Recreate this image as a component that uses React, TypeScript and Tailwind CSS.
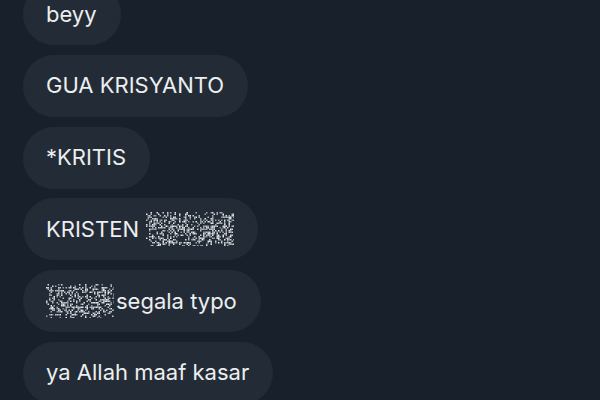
const FONT = { fontFamily: "Inter, 'Liberation Sans', sans-serif" };

function rng(seed: number) {
  let s = seed;
  return () => {
    s = (s * 1103515245 + 12345) & 0x7fffffff;
    return s / 0x7fffffff;
  };
}

function Redacted({ width, height, seed }: { width: number; height: number; seed: number }) {
  const rand = rng(seed);
  const dots: { x: number; y: number; o: number }[] = [];
  for (let y = 0; y < height; y += 1.5) {
    for (let x = 0; x < width; x += 1.5) {
      const edge = Math.min(x, width - x, y, height - y);
      const p = edge < 3 ? 0.2 : 0.42;
      if (rand() < p) dots.push({ x, y, o: 0.5 + rand() * 0.5 });
    }
  }
  return (
    <svg width={width} height={height} className="shrink-0">
      {dots.map((d, i) => (
        <rect key={i} x={d.x} y={d.y} width={1.5} height={1.5} fill="#eceef0" opacity={d.o} />
      ))}
    </svg>
  );
}

function Bubble({ children }: { children: React.ReactNode }) {
  return (
    <div className="flex h-[62px] w-fit items-center rounded-full bg-[#232c36] pl-[23px] pr-[24px] text-[22px] text-[#eceef0]">
      {children}
    </div>
  );
}

export default function App() {
  return (
    <div className="h-[400px] w-[600px] overflow-hidden bg-[#18212b]" style={FONT}>
      <div className="mt-[-17px] flex flex-col gap-[9.75px] pl-[23px]">
        <Bubble>beyy</Bubble>
        <Bubble>GUA KRISYANTO</Bubble>
        <Bubble>*KRITIS</Bubble>
        <Bubble>
          <span>KRISTEN</span>
          <span className="ml-[7px]">
            <Redacted width={88} height={34} seed={17} />
          </span>
        </Bubble>
        <Bubble>
          <Redacted width={68} height={34} seed={91} />
          <span className="ml-[2px]">segala typo</span>
        </Bubble>
        <Bubble>ya Allah maaf kasar</Bubble>
      </div>
    </div>
  );
}
